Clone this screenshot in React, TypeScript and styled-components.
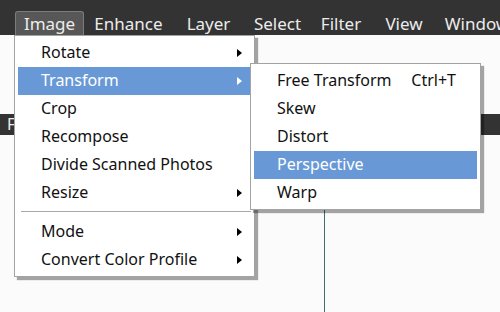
import styled, { createGlobalStyle } from "styled-components";

const Global = createGlobalStyle`
  html, body {
    margin: 0;
    padding: 0;
    background: #fbfbfb;
  }
  body {
    font-family: "Noto Sans", "Open Sans", sans-serif;
  }
`;

const Screen = styled.div`
  position: relative;
  width: 500px;
  height: 312px;
  overflow: hidden;
  background: #fbfbfb;
`;

const MenuBar = styled.div`
  display: flex;
  align-items: flex-end;
  height: 35px;
  background: #333333;
`;

const BarItem = styled.div<{ $open?: boolean; $w: number }>`
  flex: none;
  width: ${(p) => p.$w}px;
  height: 24px;
  box-sizing: border-box;
  display: flex;
  align-items: center;
  justify-content: center;
  color: #ececec;
  font-size: 17px;
  padding-bottom: 1px;
  white-space: nowrap;
  background: ${(p) => (p.$open ? "#575757" : "transparent")};
  border: 1px solid ${(p) => (p.$open ? "#7c7c7c" : "transparent")};
  border-bottom: none;
  border-radius: 3px 3px 0 0;
`;

const Content = styled.div`
  height: 277px;
  display: flex;
  flex-direction: column;
`;

const Toolbar = styled.div`
  margin-top: 79px;
  height: 21px;
  background: #333333;
  color: #eeeeee;
  font-size: 16px;
  line-height: 21px;
  padding-left: 7px;
`;

const Canvas = styled.div`
  flex: 1;
  display: flex;
  padding-left: 324px;
  padding-top: 65px;
`;

const Guide = styled.div`
  width: 1px;
  background: #3f6f70;
`;

const Menu = styled.div<{ $left: number; $top: number; $width: number }>`
  position: absolute;
  left: ${(p) => p.$left}px;
  top: ${(p) => p.$top}px;
  width: ${(p) => p.$width}px;
  box-sizing: border-box;
  display: flex;
  flex-direction: column;
  background: #ffffff;
  border: 1px solid #a3a3a3;
  box-shadow: 3px 3px 1px rgba(0, 0, 0, 0.35);
  padding: 3px 3px 2px 3px;
`;

const Row = styled.div<{ $active?: boolean }>`
  display: flex;
  align-items: center;
  height: 28px;
  padding: 0 9px 2px 23px;
  box-sizing: border-box;
  font-size: 16px;
  color: ${(p) => (p.$active ? "#ffffff" : "#111111")};
  background: ${(p) => (p.$active ? "#6899d6" : "transparent")};
`;

const Label = styled.span`
  flex: 1;
`;

const Shortcut = styled.span`
  flex: none;
  margin-right: 12px;
`;

const Arrow = styled.span<{ $active?: boolean }>`
  width: 0;
  height: 0;
  margin-top: 2px;
  border-top: 4px solid transparent;
  border-bottom: 4px solid transparent;
  border-left: 5px solid ${(p) => (p.$active ? "#ffffff" : "#000000")};
`;

const Separator = styled.div`
  height: 1px;
  background: #a8a8a8;
  margin: 4px 0 6px 3px;
`;

type Item = { label: string; sub?: boolean; active?: boolean; shortcut?: string };

const imageItems: (Item | "sep")[] = [
  { label: "Rotate", sub: true },
  { label: "Transform", sub: true, active: true },
  { label: "Crop" },
  { label: "Recompose" },
  { label: "Divide Scanned Photos" },
  { label: "Resize", sub: true },
  "sep",
  { label: "Mode", sub: true },
  { label: "Convert Color Profile", sub: true },
];

const transformItems: Item[] = [
  { label: "Free Transform", shortcut: "Ctrl+T" },
  { label: "Skew" },
  { label: "Distort" },
  { label: "Perspective", active: true },
  { label: "Warp" },
];

const bar = [
  { label: "", w: 15 },
  { label: "Image", w: 69, open: true },
  { label: "Enhance", w: 89 },
  { label: "Layer", w: 71 },
  { label: "Select", w: 67 },
  { label: "Filter", w: 60 },
  { label: "View", w: 66 },
  { label: "Window", w: 80 },
];

export default function App() {
  return (
    <Screen>
      <Global />
      <MenuBar>
        {bar.map((b, i) => (
          <BarItem key={i} $w={b.w} $open={b.open}>
            {b.label}
          </BarItem>
        ))}
      </MenuBar>
      <Content>
        <Toolbar>F</Toolbar>
        <Canvas>
          <Guide />
        </Canvas>
      </Content>
      <Menu $left={14} $top={35} $width={241}>
        {imageItems.map((it, i) =>
          it === "sep" ? (
            <Separator key={i} />
          ) : (
            <Row key={it.label} $active={it.active}>
              <Label>{it.label}</Label>
              {it.sub && <Arrow $active={it.active} />}
            </Row>
          )
        )}
      </Menu>
      <Menu $left={250} $top={63} $width={231}>
        {transformItems.map((it) => (
          <Row key={it.label} $active={it.active}>
            <Label>{it.label}</Label>
            {it.shortcut && <Shortcut>{it.shortcut}</Shortcut>}
          </Row>
        ))}
      </Menu>
    </Screen>
  );
}
